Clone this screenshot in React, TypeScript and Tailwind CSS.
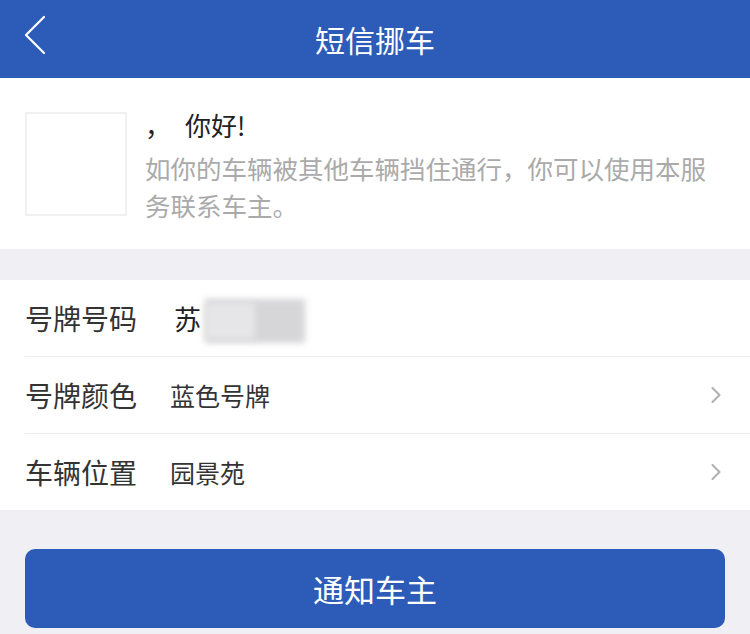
import { ChevronRight } from "lucide-react";

interface InfoRow {
  label: string;
  value: string;
  arrow: boolean;
}

const rows: InfoRow[] = [
  { label: "号牌号码", value: "苏", arrow: false },
  { label: "号牌颜色", value: "蓝色号牌", arrow: true },
  { label: "车辆位置", value: "园景苑", arrow: true },
];

const font = { fontFamily: '"Noto Sans CJK SC", "Noto Sans", sans-serif' };

const App = () => {
  return (
    <div className="flex flex-col w-[750px] h-[634px] overflow-hidden bg-[#f0eff4]" style={font}>
      {/* header */}
      <div className="relative flex items-center justify-center h-[78px] bg-[#2d5cb8] shrink-0">
        <svg
          className="absolute left-[22px] top-[15px]"
          width="26"
          height="40"
          viewBox="0 0 26 40"
          fill="none"
        >
          <polyline
            points="22,2 4,20 22,38"
            stroke="#ffffff"
            strokeWidth="2.2"
            strokeLinecap="round"
            strokeLinejoin="round"
          />
        </svg>
        <div className="text-[30px] text-white leading-none">短信挪车</div>
      </div>

      {/* greeting */}
      <div className="flex flex-row h-[171px] pt-[34px] px-[25px] bg-white shrink-0">
        <div className="w-[102px] h-[104px] border-2 border-[#f1f1f3] bg-white shrink-0"></div>
        <div className="flex flex-col ml-[18px] pr-[12px]">
          <div className="text-[26px] leading-[30px] text-[#222] mt-[-2px]">
            <span className="mr-[14px]">，</span>你好!
          </div>
          <div className="mt-[9px] text-[25.5px] leading-[37px] text-[#aaaaaa]">
            如你的车辆被其他车辆挡住通行，你可以使用本服务联系车主。
          </div>
        </div>
      </div>

      {/* form rows */}
      <div className="flex flex-col mt-[31px] bg-white shrink-0">
        {rows.map((row, index) => (
          <div key={index} className="flex flex-col">
            <div className="flex flex-row items-center h-[76px] pl-[25px] pr-[20px]">
              <div className="w-[145px] text-[28px] text-[#333] leading-none">{row.label}</div>
              {index === 0 ? (
                <div className="flex flex-row items-center flex-1">
                  <span className="text-[27px] text-[#222] leading-none ml-[4px]">苏</span>
                  <div className="relative w-[100px] h-[44px] ml-[4px] mt-[6px]">
                    <div className="absolute inset-0 bg-[#d6d6d8] blur-[3px]"></div>
                    <div className="absolute left-0 top-[4px] w-[50px] h-[36px] bg-[#e6e6e8] blur-[3px]"></div>
                  </div>
                </div>
              ) : (
                <div className="flex-1 text-[25px] text-[#333] leading-none">{row.value}</div>
              )}
              {row.arrow && (
                <ChevronRight className="w-[28px] h-[28px] text-[#b0b0b0]" strokeWidth={1.8} />
              )}
            </div>
            {index < rows.length - 1 && <div className="ml-[25px] h-px bg-[#ececec]"></div>}
          </div>
        ))}
      </div>

      {/* button */}
      <div className="px-[25px] pt-[39px]">
        <button
          type="button"
          className="flex items-center justify-center w-full h-[79px] rounded-[10px] bg-[#2d5cb8] text-white text-[31px] leading-none"
          style={font}
        >
          通知车主
        </button>
      </div>
    </div>
  );
};

export default App;
